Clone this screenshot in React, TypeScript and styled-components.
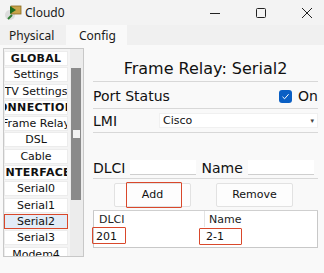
import React from 'react';
import styled, { createGlobalStyle } from 'styled-components';

const GlobalStyle = createGlobalStyle`
  html, body {
    margin: 0;
    padding: 0;
    background: #f9f9f9;
  }
  * { box-sizing: border-box; }
`;

const Window = styled.div`
  width: 324px;
  height: 273px;
  display: flex;
  flex-direction: column;
  background: #f9f9f9;
  overflow: hidden;
  font-family: "DejaVu Sans", Verdana, sans-serif;
  color: #111;
`;

const TitleBar = styled.div`
  height: 25px;
  display: flex;
  align-items: center;
  background: #f3f3f3;
  padding-left: 4px;
`;

const TitleText = styled.span`
  font-family: "Noto Sans", "Open Sans", sans-serif;
  font-size: 12px;
  margin-left: 3px;
  flex: 1;
  color: #1a1a1a;
`;

const WinButtons = styled.div`
  display: flex;
  gap: 12px;
`;

const WinButton = styled.div`
  width: 34px;
  height: 25px;
  display: flex;
  align-items: center;
  justify-content: center;
`;

const TabBar = styled.div`
  height: 20px;
  display: flex;
  background: #f0f0f0;
`;

const Tab = styled.div<{ active?: boolean }>`
  padding: 0 10px 0 ${p => (p.active ? '13px' : '9px')};
  width: ${p => (p.active ? '61px' : '66px')};
  display: flex;
  align-items: center;
  font-family: "Noto Sans", "Open Sans", sans-serif;
  font-size: 12px;
  background: ${p => (p.active ? '#f9f9f9' : '#f0f0f0')};
  color: #1a1a1a;
`;

const Body = styled.div`
  flex: 1;
  display: flex;
  padding: 3px 6px 0 3px;
  gap: 9px;
`;

const Sidebar = styled.div`
  width: 81px;
  height: 209px;
  display: flex;
  border: 1px solid #c8c8c8;
  background: #f4f4f4;
  overflow: hidden;
`;

const ItemList = styled.div`
  width: 64px;
  display: flex;
  flex-direction: column;
  gap: 1.3px;
  padding-top: 2px;
`;

const Item = styled.div<{ header?: boolean; selected?: boolean }>`
  height: 15px;
  flex-shrink: 0;
  display: flex;
  align-items: center;
  justify-content: center;
  white-space: nowrap;
  overflow: hidden;
  font-size: 11px;
  font-weight: ${p => (p.header ? 'bold' : 'normal')};
  letter-spacing: ${p => (p.header ? '0.3px' : '0')};
  background: ${p => (p.selected ? '#e3ecf7' : '#fff')};
  border: ${p => (p.selected ? '1.5px solid #d9482b' : '1px solid #ececec')};
  color: #111;
`;

const ScrollTrack = styled.div`
  position: relative;
  width: 14px;
  margin-left: 2px;
  background: #ececec;
`;

const ScrollThumb = styled.div`
  position: absolute;
  left: 1px;
  right: 2px;
  top: 19px;
  height: 132px;
  background: #8a8a8a;
`;

const ScrollGrip = styled.div`
  position: absolute;
  left: 3px;
  top: 81px;
  width: 7px;
  height: 8px;
  background: #f2f2f2;
`;

const Panel = styled.div`
  flex: 1;
  display: flex;
  flex-direction: column;
`;

const PanelTitle = styled.div`
  height: 34px;
  display: flex;
  align-items: flex-end;
  justify-content: center;
  padding-bottom: 3px;
  font-size: 16px;
  border-bottom: 1px solid #d8d8d8;
`;

const Row = styled.div<{ h: number; pt?: number }>`
  height: ${p => p.h}px;
  display: flex;
  align-items: center;
  padding-top: ${p => p.pt ?? 0}px;
  border-bottom: 1px solid #d8d8d8;
  font-size: 14px;
`;

const Spacer = styled.div`
  flex: 1;
`;

const Check = styled.div`
  width: 13px;
  height: 13px;
  border-radius: 3px;
  background: #0a5fc4;
  display: flex;
  align-items: center;
  justify-content: center;
  margin-right: 6px;
`;

const LmiLabel = styled.span`
  width: 66px;
`;

const Select = styled.div`
  flex: 1;
  height: 15px;
  display: flex;
  align-items: center;
  padding: 0 3px;
  background: #fff;
  font-size: 11px;
  border: 1px solid #f0f0f0;
`;

const Caret = styled.span`
  font-size: 7px;
  color: #444;
`;

const Gap = styled.div`
  height: 24px;
`;

const DlciRow = styled.div`
  height: 22px;
  display: flex;
  align-items: center;
  font-size: 14px;
  border-bottom: 1px solid #d8d8d8;
  gap: 5px;
`;

const TextInput = styled.div<{ w: number }>`
  width: ${p => p.w}px;
  height: 15px;
  background: #fff;
  border-bottom: 1px solid #cfcfcf;
`;

const ButtonRow = styled.div`
  height: 32px;
  display: flex;
  align-items: center;
  padding-left: 21px;
  gap: 25px;
  border-bottom: 1px solid #cfcfcf;
`;

const Button = styled.div`
  position: relative;
  width: 77px;
  height: 24px;
  display: flex;
  align-items: center;
  justify-content: center;
  font-size: 11px;
  background: #fdfdfd;
  border: 1px solid #e2e2e2;
  border-radius: 2px;
`;

const Highlight = styled.div<{ l: number; t: number; w: number; h: number }>`
  position: absolute;
  left: ${p => p.l}px;
  top: ${p => p.t}px;
  width: ${p => p.w}px;
  height: ${p => p.h}px;
  border: 1.5px solid #d9482b;
  border-radius: 1px;
`;

const Table = styled.div`
  position: relative;
  height: 37px;
  border: 1px solid #c8c8c8;
  border-top: none;
  background: #fff;
  font-size: 11px;
`;

const TableRow = styled.div<{ h: number }>`
  height: ${p => p.h}px;
  display: grid;
  grid-template-columns: 110px 1fr;
  align-items: center;
`;

const HeadCell = styled.div<{ divider?: boolean }>`
  padding-left: ${p => (p.divider ? '4px' : '5px')};
  height: 100%;
  display: flex;
  align-items: center;
  color: #222;
  border-left: ${p => (p.divider ? '1px solid #e4e4e4' : 'none')};
`;

const Cell = styled.div`
  padding-left: 2px;
  color: #111;
`;

export default function App() {
  return (
    <>
      <GlobalStyle />
      <Window>
        <TitleBar>
          <svg width="18" height="18" viewBox="0 0 18 18">
            <circle cx="6" cy="11" r="5" fill="#dcdcdc" />
            <line x1="4" y1="15" x2="8" y2="11" stroke="#2e7d32" strokeWidth="2" />
            <rect x="7" y="2" width="10" height="8" fill="#c9a34a" stroke="#8a6a20" strokeWidth="0.8" />
            <polygon points="6,2 12,6 6,10" fill="#1d6b1d" />
          </svg>
          <TitleText>Cloud0</TitleText>
          <WinButtons>
            <WinButton>
              <svg width="12" height="12" viewBox="0 0 12 12"><line x1="1" y1="6.5" x2="11" y2="6.5" stroke="#222" strokeWidth="1" /></svg>
            </WinButton>
            <WinButton>
              <svg width="12" height="12" viewBox="0 0 12 12"><rect x="1.5" y="1.5" width="9" height="9" rx="1" fill="none" stroke="#222" strokeWidth="1" /></svg>
            </WinButton>
            <WinButton>
              <svg width="12" height="12" viewBox="0 0 12 12"><path d="M1 1 L11 11 M11 1 L1 11" stroke="#222" strokeWidth="1" /></svg>
            </WinButton>
          </WinButtons>
        </TitleBar>
        <TabBar>
          <Tab>Physical</Tab>
          <Tab active>Config</Tab>
        </TabBar>
        <Body>
          <Sidebar>
            <ItemList>
              <Item header>GLOBAL</Item>
              <Item>Settings</Item>
              <Item>TV Settings</Item>
              <Item header>CONNECTIONS</Item>
              <Item>Frame Relay</Item>
              <Item>DSL</Item>
              <Item>Cable</Item>
              <Item header>INTERFACE</Item>
              <Item>Serial0</Item>
              <Item>Serial1</Item>
              <Item selected>Serial2</Item>
              <Item>Serial3</Item>
              <Item>Modem4</Item>
            </ItemList>
            <ScrollTrack>
              <ScrollThumb />
              <ScrollGrip />
            </ScrollTrack>
          </Sidebar>
          <Panel>
            <PanelTitle>Frame Relay: Serial2</PanelTitle>
            <Row h={27} pt={2}>
              Port Status
              <Spacer />
              <Check>
                <svg width="9" height="9" viewBox="0 0 9 9"><path d="M1.5 4.8 L3.6 6.8 L7.6 2.2" fill="none" stroke="#fff" strokeWidth="1" /></svg>
              </Check>
              On
            </Row>
            <Row h={24}>
              <LmiLabel>LMI</LmiLabel>
              <Select>
                Cisco
                <Spacer />
                <Caret>▾</Caret>
              </Select>
            </Row>
            <Gap />
            <DlciRow>
              DLCI
              <TextInput w={66} />
              Name
              <TextInput w={66} />
            </DlciRow>
            <ButtonRow>
              <Button>
                Add
                <Highlight l={11} t={-2} w={56} h={26} />
              </Button>
              <Button>Remove</Button>
            </ButtonRow>
            <Table>
              <TableRow h={16}>
                <HeadCell>DLCI</HeadCell>
                <HeadCell divider>Name</HeadCell>
              </TableRow>
              <TableRow h={18}>
                <Cell>201</Cell>
                <Cell>2-1</Cell>
              </TableRow>
              <Highlight l={-2} t={16} w={34} h={17} />
              <Highlight l={105} t={17} w={43} h={17} />
            </Table>
          </Panel>
        </Body>
      </Window>
    </>
  );
}
